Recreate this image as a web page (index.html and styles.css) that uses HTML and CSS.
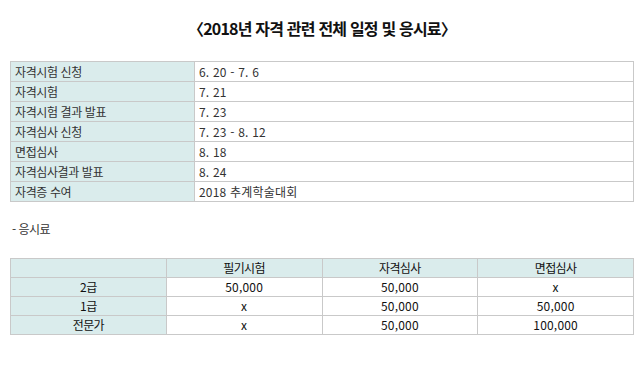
FILE: index.html
```html
<!DOCTYPE html>
<html lang="ko">
<head>
<meta charset="utf-8">
<link rel="stylesheet" href="styles.css">
</head>
<body>
<div class="page">
  <h1 class="title">〈2018년 자격 관련 전체 일정 및 응시료〉</h1>
  <table class="schedule">
    <tr><th>자격시험 신청</th><td>6. 20 - 7. 6</td></tr>
    <tr><th>자격시험</th><td>7. 21</td></tr>
    <tr><th>자격시험 결과 발표</th><td>7. 23</td></tr>
    <tr><th>자격심사 신청</th><td>7. 23 - 8. 12</td></tr>
    <tr><th>면접심사</th><td>8. 18</td></tr>
    <tr><th>자격심사결과 발표</th><td>8. 24</td></tr>
    <tr><th>자격증 수여</th><td>2018 추계학술대회</td></tr>
  </table>
  <p class="label">- 응시료</p>
  <table class="fees">
    <tr><th></th><th>필기시험</th><th>자격심사</th><th>면접심사</th></tr>
    <tr><th>2급</th><td>50,000</td><td>50,000</td><td>x</td></tr>
    <tr><th>1급</th><td>x</td><td>50,000</td><td>50,000</td></tr>
    <tr><th>전문가</th><td>x</td><td>50,000</td><td>100,000</td></tr>
  </table>
</div>
</body>
</html>
```
FILE: styles.css
```css
html, body {
  margin: 0;
  padding: 0;
  background: #fff;
}
.page {
  padding: 0 10px;
  font-family: "Noto Sans CJK KR", "Noto Sans", sans-serif;
  color: #222;
}
.title {
  margin: 0;
  height: 57px;
  padding-top: 17px;
  box-sizing: border-box;
  text-align: center;
  font-size: 16px;
  line-height: 22px;
  font-weight: bold;
  letter-spacing: -0.8px;
  color: #111;
  margin-bottom: 4px;
}
table {
  width: 100%;
  border-collapse: collapse;
  table-layout: fixed;
}
th, td {
  border: 1px solid #c9c9c9;
  font-weight: normal;
  white-space: nowrap;
  overflow: hidden;
}
th {
  background: #daecec;
}
.schedule th, .schedule td {
  text-align: left;
  font-size: 12px;
  line-height: 19px;
  height: 19px;
  padding: 0 4px;
  letter-spacing: -0.4px;
  color: #333;
}
.schedule td {
  letter-spacing: 0.2px;
}
.schedule th {
  width: 175px;
}
.label {
  margin: 0;
  padding: 18px 0 0 2px;
  height: 56px;
  box-sizing: border-box;
  font-size: 12px;
  line-height: 18px;
  letter-spacing: -0.5px;
  color: #333;
}
.fees th, .fees td {
  text-align: center;
  font-size: 12px;
  line-height: 18px;
  height: 18px;
  padding: 0 4px;
  letter-spacing: -0.6px;
  color: #111;
}
.fees td {
  letter-spacing: 0.2px;
}
```
